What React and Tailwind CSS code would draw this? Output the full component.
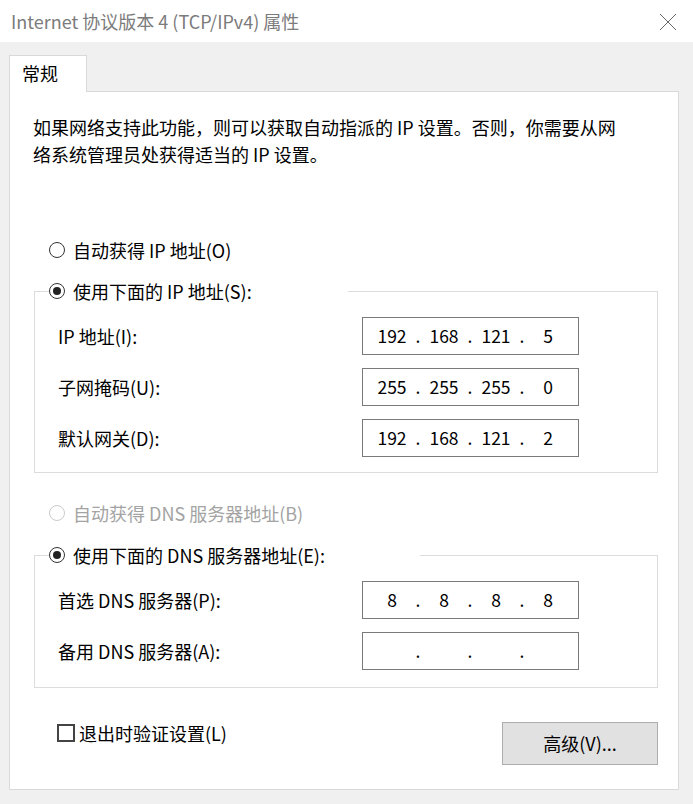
import React from 'react'

const font = "font-['Noto_Sans_CJK_SC','Noto_Sans',sans-serif]"

function Radio({ checked, disabled, label }) {
  return (
    <div className="flex items-center h-[24px]">
      <span
        className={`w-[16px] h-[16px] rounded-full border flex items-center justify-center shrink-0 ${disabled ? 'border-[#cccccc]' : 'border-[#333333]'}`}
      >
        {checked && <span className="w-[8px] h-[8px] rounded-full bg-[#222222]" />}
      </span>
      <span className={`ml-[8px] whitespace-nowrap ${disabled ? 'text-[#a3a3a3]' : 'text-black'}`}>{label}</span>
    </div>
  )
}

function IpBox({ octets }) {
  return (
    <div className="w-[217px] h-[38px] border border-[#7a7a7a] bg-white flex items-center pl-[7px] text-[17.5px]">
      {octets.map((o, i) => (
        <React.Fragment key={i}>
          {i > 0 && <span className="w-[8px] text-center">.</span>}
          <span className="w-[44px] text-center">{o}</span>
        </React.Fragment>
      ))}
    </div>
  )
}

function Field({ label, octets, first }) {
  return (
    <div className={`flex items-center ${first ? '' : 'mt-[13px]'}`}>
      <span className="ml-[9px] w-[304px] whitespace-nowrap">{label}</span>
      <IpBox octets={octets} />
    </div>
  )
}

function Group({ legend, legendWidth, children, pb }) {
  return (
    <fieldset className={`ml-[24px] w-[624px] border border-[#dcdcdc] pl-[14px] pt-[14px] ${pb}`}>
      <legend className={`p-0 ${legendWidth}`}>
        <Radio checked label={legend} />
      </legend>
      {children}
    </fieldset>
  )
}

export default function App() {
  return (
    <div className={`w-[693px] h-[804px] bg-[#f0f0f0] overflow-hidden flex flex-col text-[18px] text-black ${font}`}>
      <div className="h-[42px] bg-white flex items-center justify-between pl-[11px] pr-[16px] shrink-0">
        <span className="text-[#7b7b7b] whitespace-nowrap">Internet 协议版本 4 (TCP/IPv4) 属性</span>
        <svg width="18" height="18" viewBox="0 0 18 18" className="mt-[1px]">
          <path d="M1 1 L17 17 M17 1 L1 17" stroke="#666666" strokeWidth="1" fill="none" />
        </svg>
      </div>

      <div className="px-[9px] pt-[13px] flex flex-col">
        <div className="w-[78px] h-[37px] bg-white border border-b-0 border-[#d9d9d9] -mb-px relative z-10 pl-[12px] pt-[5px] leading-[24px]">
          常规
        </div>

        <div className="w-[670px] h-[699px] bg-white border border-[#d9d9d9] flex flex-col">
          <p className="ml-[23px] mt-[22px] leading-[27px] whitespace-nowrap">
            如果网络支持此功能，则可以获取自动指派的 IP 设置。否则，你需要从网
            <br />
            络系统管理员处获得适当的 IP 设置。
          </p>

          <div className="ml-[39px] mt-[70px]">
            <Radio label="自动获得 IP 地址(O)" />
          </div>

          <div className="mt-[17px]">
            <Group legend="使用下面的 IP 地址(S):" legendWidth="w-[299px]" pb="pb-[15px]">
              <Field first label="IP 地址(I):" octets={['192', '168', '121', '5']} />
              <Field label="子网掩码(U):" octets={['255', '255', '255', '0']} />
              <Field label="默认网关(D):" octets={['192', '168', '121', '2']} />
            </Group>
          </div>

          <div className="ml-[39px] mt-[28px]">
            <Radio disabled label="自动获得 DNS 服务器地址(B)" />
          </div>

          <div className="mt-[18px]">
            <Group legend="使用下面的 DNS 服务器地址(E):" legendWidth="w-[371px]" pb="pb-[17px]">
              <Field first label="首选 DNS 服务器(P):" octets={['8', '8', '8', '8']} />
              <Field label="备用 DNS 服务器(A):" octets={['', '', '', '']} />
            </Group>
          </div>

          <div className="mt-[33px] flex items-start justify-between">
            <div className="ml-[47px] flex items-center h-[24px]">
              <span className="w-[18px] h-[18px] border-2 border-[#444444] shrink-0" />
              <span className="ml-[4px] whitespace-nowrap">退出时验证设置(L)</span>
            </div>
            <button className="mr-[20px] mt-[1px] w-[156px] h-[43px] bg-[#e1e1e1] border border-[#adadad] flex items-center justify-center">
              高级(V)...
            </button>
          </div>
        </div>
      </div>
    </div>
  )
}
